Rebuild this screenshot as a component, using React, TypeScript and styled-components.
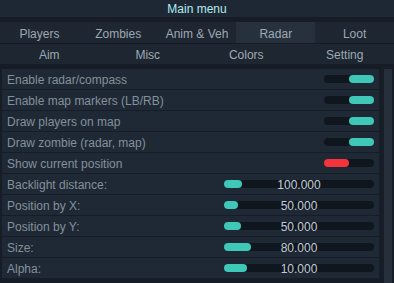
import React from "react";
import styled, { createGlobalStyle } from "styled-components";

const Global = createGlobalStyle`
  html, body { margin: 0; padding: 0; background: #161d27; }
  body { font-family: "Liberation Sans", Arial, sans-serif; }
`;

const Screen = styled.div`
  width: 394px;
  height: 283px;
  background: #161d27;
  display: flex;
  flex-direction: column;
  overflow: hidden;
`;

const TitleBar = styled.div`
  height: 17px;
  background: #1e2834;
  color: #b2ecef;
  font-size: 12px;
  line-height: 19px;
  text-align: center;
  margin-bottom: 5px;
`;

const TabRow = styled.div<{ $cols: number; $h: number }>`
  display: grid;
  grid-template-columns: repeat(${(p) => p.$cols}, 1fr);
  height: ${(p) => p.$h}px;
  background: #1d2631;
  border-bottom: 1px solid #151c25;
`;

const Tab = styled.div<{ $active?: boolean }>`
  display: flex;
  align-items: center;
  justify-content: center;
  padding-top: 2px;
  font-size: 12px;
  color: #9ea9b4;
  background: ${(p) => (p.$active ? "#26313d" : "transparent")};
`;

const Body = styled.div`
  display: flex;
  margin-top: 4px;
  padding-left: 2px;
  gap: 5px;
  flex: 1;
`;

const List = styled.div`
  width: 377px;
  display: flex;
  flex-direction: column;
  gap: 1px;
`;

const Row = styled.div`
  height: 20px;
  background: #1f2935;
  display: flex;
  align-items: center;
  padding: 0 5px;
`;

const Label = styled.div`
  flex: 1;
  padding-top: 2px;
  font-size: 12px;
  color: #848f9a;
  white-space: nowrap;
`;

const Toggle = styled.div<{ $on: boolean }>`
  width: 50px;
  height: 8px;
  border-radius: 4px;
  background: #0f161e;
  display: flex;
  justify-content: ${(p) => (p.$on ? "flex-end" : "flex-start")};
`;

const Knob = styled.div<{ $on: boolean }>`
  width: 25px;
  height: 8px;
  border-radius: 4px;
  background: ${(p) => (p.$on ? "#3fc7b8" : "#f5333b")};
`;

const Slider = styled.div`
  position: relative;
  width: 150px;
  height: 8px;
  border-radius: 4px;
  background: #0f161e;
`;

const Fill = styled.div`
  height: 8px;
  border-radius: 4px;
  background: #3fc7b8;
`;

const Value = styled.div`
  position: absolute;
  left: 0;
  right: 0;
  top: -3px;
  line-height: 16px;
  text-align: center;
  font-size: 12px;
  color: #c3cbd3;
`;

const Scrollbar = styled.div`
  width: 8px;
  background: #26303c;
`;

const toggles: [string, boolean][] = [
  ["Enable radar/compass", true],
  ["Enable map markers (LB/RB)", true],
  ["Draw players on map", true],
  ["Draw zombie (radar, map)", true],
  ["Show current position", false],
];

const sliders: [string, string, number][] = [
  ["Backlight distance:", "100.000", 18],
  ["Position by X:", "50.000", 14],
  ["Position by Y:", "50.000", 17],
  ["Size:", "80.000", 27],
  ["Alpha:", "10.000", 23],
];

export default function App() {
  return (
    <Screen>
      <Global />
      <TitleBar>Main menu</TitleBar>
      <TabRow $cols={5} $h={21}>
        {["Players", "Zombies", "Anim & Veh", "Radar", "Loot"].map((t) => (
          <Tab key={t} $active={t === "Radar"}>
            {t}
          </Tab>
        ))}
      </TabRow>
      <TabRow $cols={4} $h={20}>
        {["Aim", "Misc", "Colors", "Setting"].map((t) => (
          <Tab key={t}>{t}</Tab>
        ))}
      </TabRow>
      <Body>
        <List>
          {toggles.map(([l, on]) => (
            <Row key={l}>
              <Label>{l}</Label>
              <Toggle $on={on}>
                <Knob $on={on} />
              </Toggle>
            </Row>
          ))}
          {sliders.map(([l, v, w]) => (
            <Row key={l}>
              <Label>{l}</Label>
              <Slider>
                <Fill style={{ width: w }} />
                <Value>{v}</Value>
              </Slider>
            </Row>
          ))}
        </List>
        <Scrollbar />
      </Body>
    </Screen>
  );
}
